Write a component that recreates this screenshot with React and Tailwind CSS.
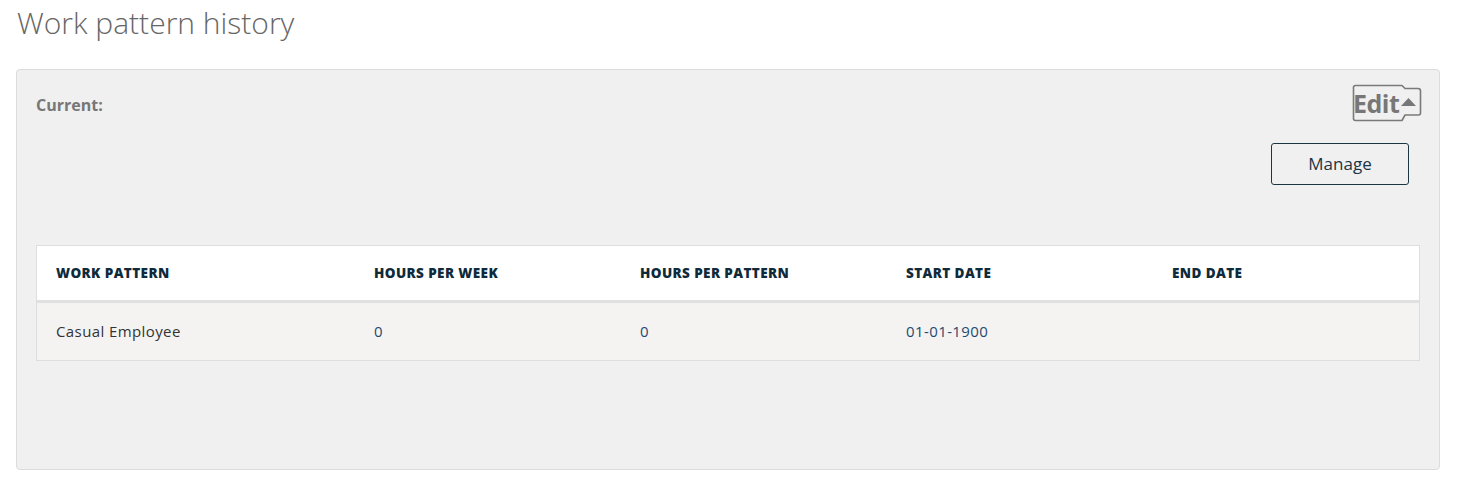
import React from 'react';

const COLS = ['WORK PATTERN', 'HOURS PER WEEK', 'HOURS PER PATTERN', 'START DATE', 'END DATE'];
const ROWS = [
  { pattern: 'Casual Employee', week: '0', perPattern: '0', start: '01-01-1900', end: '' },
];

function EditBadge() {
  return (
    <div className="relative w-[70px] h-[38px]">
      <svg className="absolute inset-0" width="70" height="38" viewBox="0 0 70 38" fill="none">
        <path
          d="M3.5 1.5 H50 L53 4.5 H66 Q68.5 4.5 68.5 7 V29 Q68.5 31 66.5 31 H53 L50 36.5 H3.5 Q1.5 36.5 1.5 34.5 V3.5 Q1.5 1.5 3.5 1.5 Z"
          stroke="#7a7a7a"
          strokeWidth="1.6"
          strokeLinejoin="round"
        />
      </svg>
      <div className="absolute left-[1px] top-[1px] flex items-center h-[36px]">
        <span className="text-[25px] leading-none font-bold text-[#777] tracking-[-0.5px]">Edit</span>
        <svg width="17" height="10" viewBox="0 0 17 10" className="ml-[1px] -mt-[3px]">
          <path d="M1 9 L8.5 1 L16 9 Z" fill="#777" />
        </svg>
      </div>
    </div>
  );
}

export default function App() {
  return (
    <div className="bg-white min-h-[485px] pl-4 pr-[17px] pt-[3px] pb-4" style={{ fontFamily: '"Open Sans", "Liberation Sans", sans-serif' }}>
      <h1 className="text-[30px] font-light text-[#666] leading-[40px] ml-[1px] mb-[26px]">Work pattern history</h1>

      <div className="bg-[#f0f0f0] border border-[#dcdcdc] rounded-[4px] h-[401px] px-[19px] pt-[14px]">
        {/* header: label + edit */}
        <div className="flex justify-between items-start">
          <div className="pt-[9px] text-[16px] font-bold text-[#777]">Current:</div>
          <div className="mr-[-2px]">
            <EditBadge />
          </div>
        </div>

        <div className="flex justify-end mt-[21px] mr-[11px]">
          <button className="w-[138px] h-[42px] border border-[#1c3545] rounded-[3px] text-[17px] text-[#1c3545] bg-transparent">
            Manage
          </button>
        </div>

        {/* table */}
        <div className="mt-[60px] border border-[#dedede]">
          <div className="grid grid-cols-[318px_266px_266px_266px_1fr] bg-white h-[57px] items-center border-b-[3px] border-[#e0e0e0]">
            {COLS.map(c => (
              <div key={c} className="pl-[19px] pt-[1px] text-[13.5px] font-extrabold tracking-[0.4px] text-[#0f2a3a]">{c}</div>
            ))}
          </div>
          {ROWS.map((r, i) => (
            <div key={i} className="grid grid-cols-[318px_266px_266px_266px_1fr] bg-[#f4f3f2] h-[57px] items-center text-[15px] tracking-[0.4px]">
              <div className="pl-[19px] text-[#333]">{r.pattern}</div>
              <div className="pl-[19px] text-[#1f4a70]">{r.week}</div>
              <div className="pl-[19px] text-[#1f4a70]">{r.perPattern}</div>
              <div className="pl-[19px] text-[#1f4a70]">{r.start}</div>
              <div className="pl-[19px] text-[#1f4a70]">{r.end}</div>
            </div>
          ))}
        </div>
      </div>
    </div>
  );
}
